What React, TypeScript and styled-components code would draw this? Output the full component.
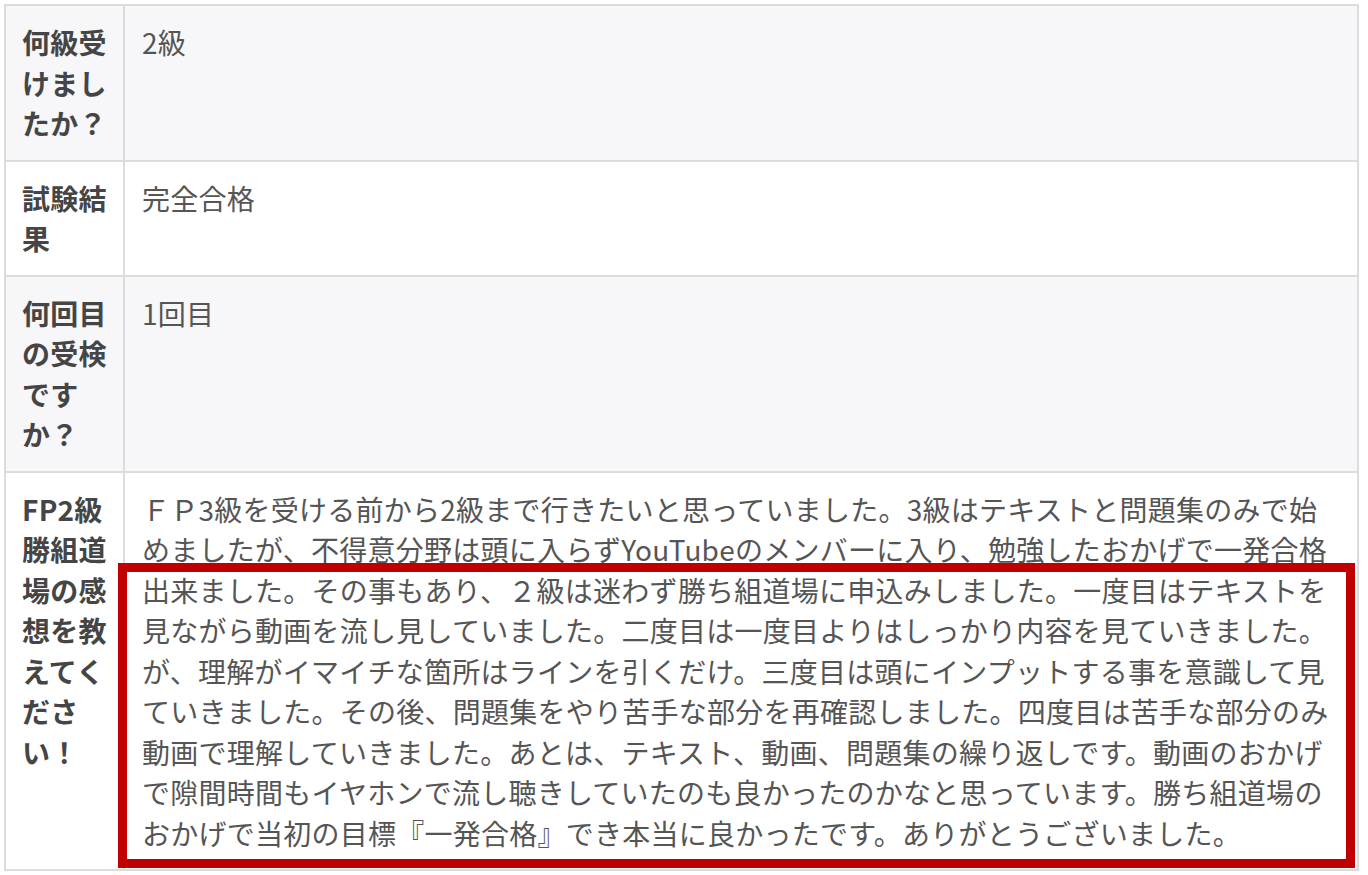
import React from "react";
import styled, { createGlobalStyle } from "styled-components";

const GlobalStyle = createGlobalStyle`
  html, body {
    margin: 0;
    padding: 0;
    background: #ffffff;
  }
  body {
    font-family: "Noto Sans CJK JP", "Noto Sans", sans-serif;
  }
`;

const Page = styled.div`
  padding: 4px;
`;

const Table = styled.div`
  display: grid;
  grid-template-columns: 117px 1fr;
  gap: 2px;
  padding: 2px;
  width: 1355px;
  box-sizing: border-box;
  background: #dcdcdc;
`;

const Cell = styled.div<{ $striped: boolean }>`
  background: ${(p) => (p.$striped ? "#f7f7f9" : "#ffffff")};
  padding: 16px 16px;
  font-size: 28px;
  line-height: 40.5px;
  letter-spacing: 0.25px;
  white-space: nowrap;
`;

const HeadCell = styled(Cell)`
  font-weight: 700;
  color: #454545;
`;

const BodyCell = styled(Cell)`
  position: relative;
  padding-left: 17px;
  color: #555555;
`;

const Highlight = styled.div`
  position: absolute;
  left: -7px;
  top: 90px;
  right: 2px;
  bottom: 1px;
  border: 9px solid #c00000;
  box-sizing: border-box;
  pointer-events: none;
`;

type Row = { head: string[]; body: string[]; highlight?: boolean };

const rows: Row[] = [
  { head: ["何級受", "けまし", "たか？"], body: ["2級"] },
  { head: ["試験結", "果"], body: ["完全合格"] },
  { head: ["何回目", "の受検", "です", "か？"], body: ["1回目"] },
  {
    head: ["FP2級", "勝組道", "場の感", "想を教", "えてく", "ださ", "い！"],
    body: [
      "ＦＰ3級を受ける前から2級まで行きたいと思っていました。3級はテキストと問題集のみで始",
      "めましたが、不得意分野は頭に入らずYouTubeのメンバーに入り、勉強したおかげで一発合格",
      "出来ました。その事もあり、２級は迷わず勝ち組道場に申込みしました。一度目はテキストを",
      "見ながら動画を流し見していました。二度目は一度目よりはしっかり内容を見ていきました。",
      "が、理解がイマイチな箇所はラインを引くだけ。三度目は頭にインプットする事を意識して見",
      "ていきました。その後、問題集をやり苦手な部分を再確認しました。四度目は苦手な部分のみ",
      "動画で理解していきました。あとは、テキスト、動画、問題集の繰り返しです。動画のおかげ",
      "で隙間時間もイヤホンで流し聴きしていたのも良かったのかなと思っています。勝ち組道場の",
      "おかげで当初の目標『一発合格』でき本当に良かったです。ありがとうございました。",
    ],
    highlight: true,
  },
];

const Lines: React.FC<{ lines: string[] }> = ({ lines }) => (
  <>
    {lines.map((l, i) => (
      <React.Fragment key={i}>
        {i > 0 && <br />}
        {l}
      </React.Fragment>
    ))}
  </>
);

export default function App() {
  return (
    <>
      <GlobalStyle />
      <Page>
        <Table>
          {rows.map((r, i) => (
            <React.Fragment key={i}>
              <HeadCell $striped={i % 2 === 0}>
                <Lines lines={r.head} />
              </HeadCell>
              <BodyCell $striped={i % 2 === 0}>
                <Lines lines={r.body} />
                {r.highlight && <Highlight />}
              </BodyCell>
            </React.Fragment>
          ))}
        </Table>
      </Page>
    </>
  );
}
